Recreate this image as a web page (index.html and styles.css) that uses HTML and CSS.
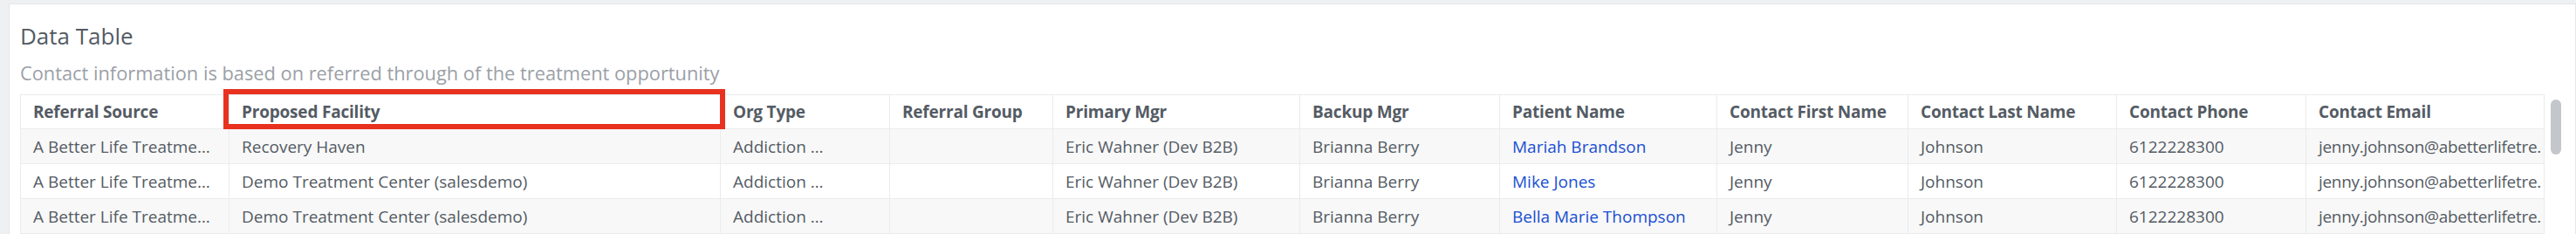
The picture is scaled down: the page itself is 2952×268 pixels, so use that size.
FILE: index.html
```html
<!DOCTYPE html>
<html>
<head>
<meta charset="utf-8">
<link rel="stylesheet" href="styles.css">
</head>
<body>
<div class="card">
  <h2 class="title">Data Table</h2>
  <p class="subtitle">Contact information is based on referred through of the treatment opportunity</p>
  <div class="grid-wrap">
    <div class="scroller">
      <table class="grid">
        <colgroup>
          <col style="width:239px"><col style="width:563px"><col style="width:194px"><col style="width:187px"><col style="width:283px"><col style="width:229px"><col style="width:249px"><col style="width:219px"><col style="width:239px"><col style="width:217px"><col style="width:273px">
        </colgroup>
        <thead>
          <tr>
            <th>Referral Source</th><th>Proposed Facility</th><th>Org Type</th><th>Referral Group</th><th>Primary Mgr</th><th>Backup Mgr</th><th>Patient Name</th><th>Contact First Name</th><th>Contact Last Name</th><th>Contact Phone</th><th>Contact Email</th>
          </tr>
        </thead>
        <tbody>
          <tr>
            <td>A Better Life Treatme…</td><td>Recovery Haven</td><td>Addiction …</td><td></td><td>Eric Wahner (Dev B2B)</td><td>Brianna Berry</td><td><a class="link">Mariah Brandson</a></td><td>Jenny</td><td>Johnson</td><td>6122228300</td><td class="clip">jenny.johnson@abetterlifetre.</td>
          </tr>
          <tr>
            <td>A Better Life Treatme…</td><td>Demo Treatment Center (salesdemo)</td><td>Addiction …</td><td></td><td>Eric Wahner (Dev B2B)</td><td>Brianna Berry</td><td><a class="link">Mike Jones</a></td><td>Jenny</td><td>Johnson</td><td>6122228300</td><td class="clip">jenny.johnson@abetterlifetre.</td>
          </tr>
          <tr>
            <td>A Better Life Treatme…</td><td>Demo Treatment Center (salesdemo)</td><td>Addiction …</td><td></td><td>Eric Wahner (Dev B2B)</td><td>Brianna Berry</td><td><a class="link">Bella Marie Thompson</a></td><td>Jenny</td><td>Johnson</td><td>6122228300</td><td class="clip">jenny.johnson@abetterlifetre.</td>
          </tr>
        </tbody>
      </table>
      <div class="highlight"></div>
    </div>
    <div class="scrollbar"><div class="thumb"></div></div>
  </div>
</div>
</body>
</html>
```
FILE: styles.css
```css
html, body {
  margin: 0;
  padding: 0;
  overflow: hidden;
  background: #eff0f2;
  font-family: "Open Sans", "Noto Sans", sans-serif;
  color: #545b64;
}

.card {
  margin: 4px 0 0 10px;
  background: #ffffff;
  border: 1px solid #e4e6e9;
  border-bottom: none;
  padding: 20px 0 0 12px;
  height: 300px;
  box-sizing: border-box;
}

.title {
  margin: 0;
  font-size: 26px;
  line-height: 32px;
  font-weight: 400;
  color: #545b64;
}

.subtitle {
  margin: 14px 0 0 0;
  font-size: 21.8px;
  line-height: 26px;
  color: #9ba0a7;
}

.grid-wrap {
  margin-top: 11px;
  display: flex;
  align-items: flex-start;
  gap: 7px;
}

.scroller {
  position: relative;
}

.grid {
  border-collapse: collapse;
  table-layout: fixed;
  width: 2892px;
  font-size: 19px;
}

.grid th,
.grid td {
  border: 1px solid #eaebed;
  padding: 0 12px 0 14px;
  text-align: left;
  white-space: nowrap;
  overflow: hidden;
  vertical-align: middle;
}

.grid th {
  height: 38px;
  font-weight: 700;
  color: #545b64;
  background: #ffffff;
  letter-spacing: -0.2px;
}

.grid td {
  height: 39px;
  color: #545b64;
}

.grid tbody tr:nth-child(odd) td {
  background: #f8f8f8;
}

.grid tbody tr:nth-child(even) td {
  background: #ffffff;
}

.grid td.clip {
  letter-spacing: -0.3px;
  padding-right: 0;
}

.link {
  color: #1a4fd2;
  text-decoration: none;
}

.highlight {
  position: absolute;
  left: 233px;
  top: -6px;
  width: 575px;
  height: 46px;
  border: 6px solid #e8321f;
  box-sizing: border-box;
}

.scrollbar {
  width: 12px;
  padding-top: 6px;
}

.thumb {
  width: 12px;
  height: 63px;
  border-radius: 6px;
  background: #c3c6ca;
}
```
